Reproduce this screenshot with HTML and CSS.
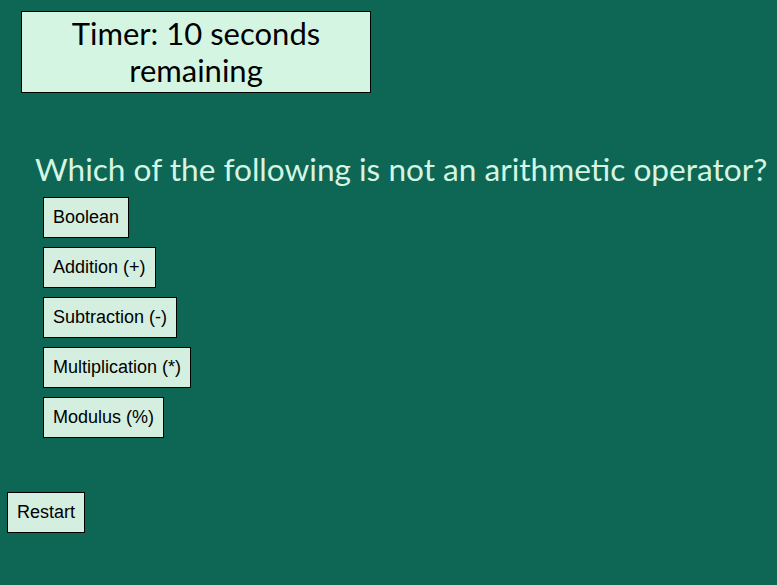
FILE: index.html
```html
<!DOCTYPE html>
<html lang="en">
<head>
<meta charset="utf-8">
<title>Quiz</title>
<link rel="stylesheet" href="styles.css">
</head>
<body>
<div class="timer">Timer: 10 seconds remaining</div>
<h1 class="question">Which of the following is not an arithmetic operator?</h1>
<div class="options">
  <button class="btn">Boolean</button>
  <button class="btn">Addition (+)</button>
  <button class="btn">Subtraction (-)</button>
  <button class="btn">Multiplication (*)</button>
  <button class="btn">Modulus (%)</button>
</div>
<button class="btn restart">Restart</button>
</body>
</html>
```
FILE: styles.css
```css
html, body {
  margin: 0;
  padding: 0;
  background: #0e6655;
  height: 100%;
  overflow: hidden;
}
body {
  padding-top: 11px;
  display: flex;
  flex-direction: column;
  align-items: flex-start;
}
.timer {
  margin-left: 21px;
  width: 350px;
  height: 82px;
  box-sizing: border-box;
  border: 1px solid #000;
  background: #d5f5e3;
  color: #000;
  font-family: Lato, "Open Sans", sans-serif;
  font-size: 31px;
  line-height: 37px;
  text-align: center;
  display: flex;
  align-items: center;
  justify-content: center;
  padding: 0 30px;
}
.question {
  margin: 56px 0 8px 35px;
  font-family: Lato, "Open Sans", sans-serif;
  font-weight: normal;
  font-size: 31.6px;
  line-height: 40px;
  color: #d5f5e3;
  white-space: nowrap;
}
.options {
  margin-left: 43px;
  display: flex;
  flex-direction: column;
  align-items: flex-start;
  gap: 9px;
}
.btn {
  font-family: "Liberation Sans", Arial, sans-serif;
  font-size: 18px;
  line-height: 21px;
  padding: 9px;
  border: 1px solid #000;
  border-radius: 0;
  background: #d4efdf;
  color: #000;
  margin: 0;
  cursor: pointer;
}
.restart {
  margin: 54px 0 0 7px;
}
```
